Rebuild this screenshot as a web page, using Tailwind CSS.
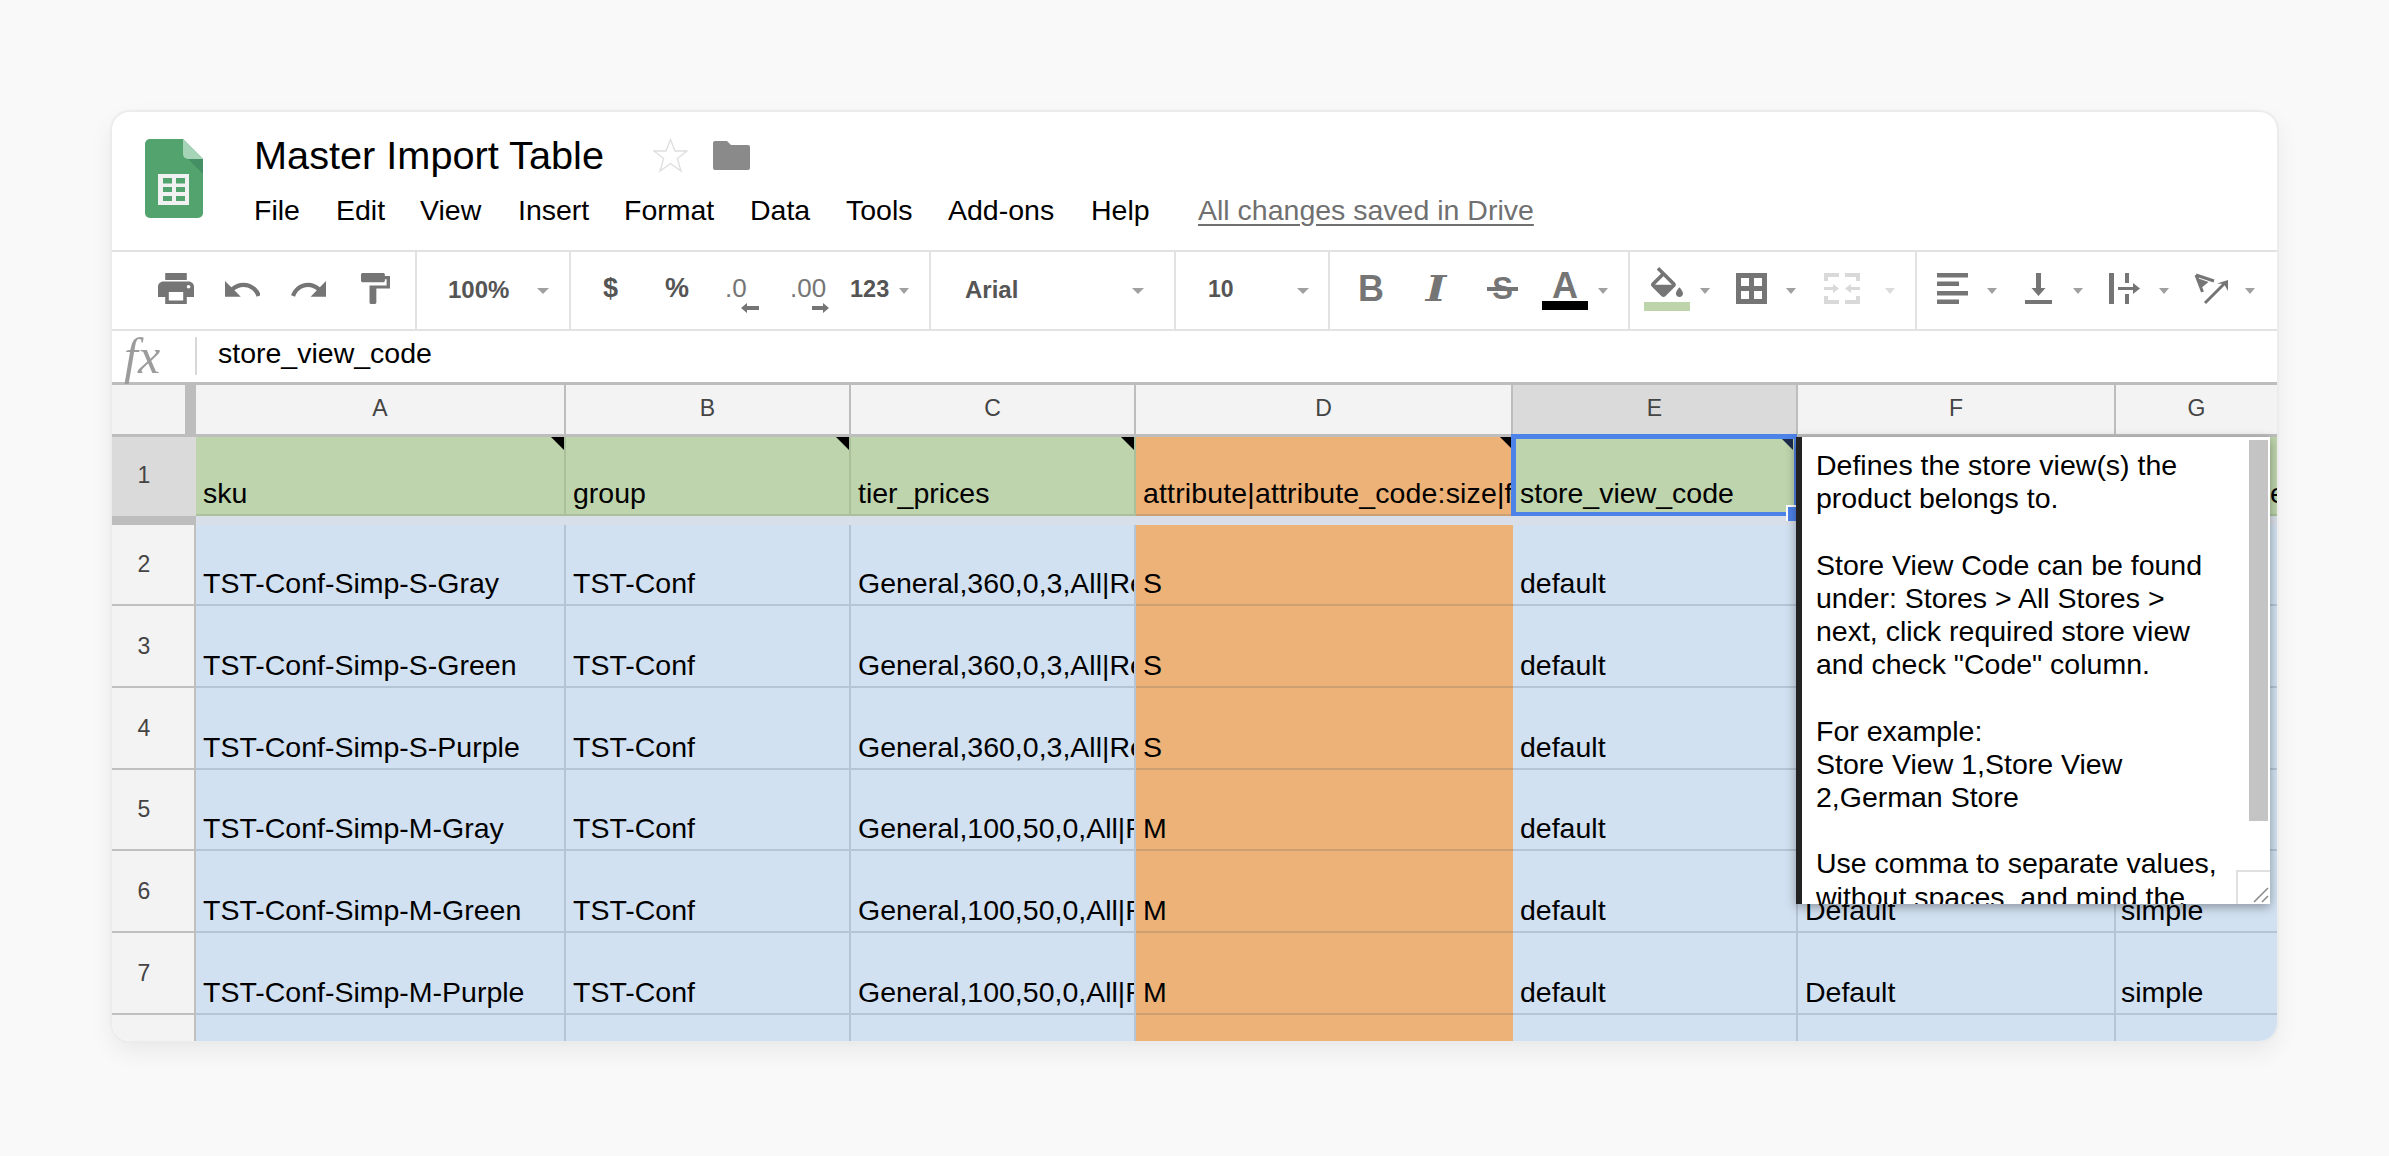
<!DOCTYPE html>
<html>
<head>
<meta charset="utf-8">
<script src="https://cdn.jsdelivr.net/npm/@tailwindcss/browser@4"></script>
</head>
<body class="m-0 h-[1156px] w-[2389px] overflow-hidden bg-[#f9f9f9] font-['Liberation_Sans',Arial,sans-serif] text-black">
<div class="ml-[112px] mt-[112px] flex h-[929px] w-[2165px] flex-col overflow-hidden rounded-[18px] bg-white shadow-[0_0_1px_2px_#ececec,0_10px_26px_rgba(0,0,0,0.07)]">

  <!-- title area -->
  <header class="flex h-[138px] shrink-0">
    <svg class="ml-[33px] mt-[27px] h-[79px] w-[58px] shrink-0" viewBox="0 0 58 79">
      <path d="M5 0H38L58 20V74a5 5 0 0 1-5 5H5a5 5 0 0 1-5-5V5a5 5 0 0 1 5-5z" fill="#52a36d"/>
      <path d="M38 0L58 20H43a5 5 0 0 1-5-5z" fill="#a5d4b7"/>
      <path d="M43 20L58 35V20z" fill="#458f64"/>
      <rect x="13" y="35" width="31" height="31" fill="#f1f1f1"/>
      <path d="M18 39h9v5.500h-9zM31 39h9v5.500h-9zM18 48h9v5h-9zM31 48h9v5h-9zM18 57h9v5h-9zM31 57h9v5h-9z" fill="#52a36d"/>
    </svg>
    <div class="ml-[51px] flex flex-col pt-[21px]">
      <div class="flex h-[45px] items-center">
        <span class="w-[349px] whitespace-nowrap text-[39.7px] leading-[45px]">Master Import Table</span>
        <svg class="ml-[50px] h-[35px] w-[35px]" viewBox="0 0 35 35"><path d="M17.500 1.500L22 13h12l-9.700 7.500L28 33l-10.500-7.500L7 33l3.700-12.500L1 13h12z" fill="#fff" stroke="#dedede" stroke-width="1.300"/></svg>
        <svg class="ml-[25px] h-[29px] w-[37px]" viewBox="0 0 37 29"><path d="M2 0h12l4 4h17a2 2 0 0 1 2 2v21a2 2 0 0 1-2 2H2a2 2 0 0 1-2-2V2a2 2 0 0 1 2-2z" fill="#8a8a8a"/></svg>
      </div>
      <nav class="mt-[15px] flex h-[33px] whitespace-nowrap text-[28.5px] leading-[34px]">
        <span class="w-[82px]">File</span>
        <span class="w-[84px]">Edit</span>
        <span class="w-[98px]">View</span>
        <span class="w-[106px]">Insert</span>
        <span class="w-[126px]">Format</span>
        <span class="w-[96px]">Data</span>
        <span class="w-[102px]">Tools</span>
        <span class="w-[143px]">Add-ons</span>
        <span class="w-[107px]">Help</span>
        <span class="text-[#707070] underline underline-offset-[4px]">All changes saved in Drive</span>
      </nav>
    </div>
  </header>

  <!-- toolbar -->
  <div class="flex h-[81px] shrink-0 border-y-2 border-[#e2e2e2] text-[#555]">
    <div class="flex w-[305px] shrink-0 items-center border-r-2 border-[#e2e2e2] pb-[4px]">
      <svg class="ml-[46px] h-[31px] w-[36px] shrink-0" viewBox="2 3 20 18" preserveAspectRatio="none"><path fill="#757575" d="M19 8H5c-1.660 0-3 1.340-3 3v6h4v4h12v-4h4v-6c0-1.660-1.340-3-3-3zm-3 11H8v-5h8v5zm3-7c-.55 0-1-.45-1-1s.45-1 1-1 1 .45 1 1-.45 1-1 1zm-1-9H6v4h12V3z"/></svg>
      <svg class="ml-[31px] h-[16px] w-[35px] shrink-0" viewBox="2 7 20 9.200" preserveAspectRatio="none"><path fill="#757575" d="M12.500 8c-2.650 0-5.050.99-6.900 2.600L2 7v9h9l-3.620-3.620c1.390-1.160 3.160-1.880 5.120-1.880 3.540 0 6.550 2.310 7.600 5.500l2.370-.78C21.080 11.030 17.150 8 12.500 8z"/></svg>
      <svg class="ml-[31px] h-[16px] w-[35px] shrink-0" viewBox="1.500 7 20.500 9.200" preserveAspectRatio="none"><path fill="#757575" d="M18.400 10.600C16.550 8.990 14.150 8 11.500 8c-4.650 0-8.580 3.030-9.960 7.220L3.900 16c1.050-3.190 4.050-5.500 7.600-5.500 1.950 0 3.730.72 5.120 1.880L13 16h9V7l-3.600 3.600z"/></svg>
      <svg class="ml-[35px] h-[31px] w-[29px] shrink-0" viewBox="4 2 17 20" preserveAspectRatio="none"><path fill="#757575" d="M18 4V3c0-.55-.45-1-1-1H5c-.55 0-1 .45-1 1v4c0 .55.45 1 1 1h12c.55 0 1-.45 1-1V6h1v4H9v11c0 .55.45 1 1 1h2c.55 0 1-.45 1-1v-9h8V4h-3z"/></svg>
    </div>
    <div class="flex w-[154px] shrink-0 items-center border-r-2 border-[#e2e2e2] pb-[4px]">
      <span class="ml-[31px] w-[61px] pt-[2px] text-[24px] font-bold">100%</span>
      <span class="ml-[28px] mt-[5px] h-0 w-0 border-x-[6px] border-t-[6px] border-x-transparent border-t-[#a0a0a0]"></span>
    </div>
    <div class="flex w-[360px] shrink-0 items-center border-r-2 border-[#e2e2e2] pb-[4px]">
      <span class="ml-[32px] w-[15px] text-[27px] font-bold leading-none">$</span>
      <span class="ml-[47px] w-[24px] text-[27px] font-bold leading-none">%</span>
      <span class="relative ml-[36px] h-[36px] w-[34px] text-[26px] leading-[35px] text-[#757575]">.0
        <svg class="absolute left-[16px] top-[32px] h-[10px] w-[18px]" viewBox="0 0 18 10"><path fill="#757575" d="M0 5L6 0v3h12v4H6v3z"/></svg>
      </span>
      <span class="relative ml-[31px] h-[36px] w-[39px] text-[26px] leading-[35px] text-[#757575]">.00
        <svg class="absolute left-[22px] top-[32px] h-[10px] w-[17px]" viewBox="0 0 17 10"><path fill="#757575" d="M17 5l-6-5v3H0v4h11v3z"/></svg>
      </span>
      <span class="ml-[21px] w-[39px] pt-[2px] text-[23.500px] font-bold">123</span>
      <span class="ml-[10px] mt-[5px] h-0 w-0 border-x-[5px] border-t-[6px] border-x-transparent border-t-[#a0a0a0]"></span>
    </div>
    <div class="flex w-[245px] shrink-0 items-center border-r-2 border-[#e2e2e2] pb-[4px]">
      <span class="ml-[34px] w-[54px] pt-[2px] text-[24px] font-bold">Arial</span>
      <span class="ml-[113px] mt-[5px] h-0 w-0 border-x-[6px] border-t-[6px] border-x-transparent border-t-[#a0a0a0]"></span>
    </div>
    <div class="flex w-[154px] shrink-0 items-center border-r-2 border-[#e2e2e2] pb-[4px]">
      <span class="ml-[32px] w-[26px] pt-[2px] text-[23px] font-bold">10</span>
      <span class="ml-[63px] mt-[5px] h-0 w-0 border-x-[6px] border-t-[6px] border-x-transparent border-t-[#a0a0a0]"></span>
    </div>
    <div class="flex w-[300px] shrink-0 items-center border-r-2 border-[#e2e2e2] pb-[4px]">
      <span class="ml-[28px] w-[22px] text-[36px] font-bold leading-none text-[#757575]">B</span>
      <span class="ml-[43px] w-[26px] scale-x-125 text-center font-['DejaVu_Serif',serif] text-[35px] font-bold italic leading-none text-[#757575]">I</span>
      <span class="relative ml-[38px] w-[31px] text-center text-[31px] font-bold leading-none text-[#757575]">S
        <span class="absolute left-0 top-[14px] h-[4px] w-[31px] bg-[#757575]"></span>
      </span>
      <span class="ml-[24px] flex w-[46px] flex-col items-center">
        <span class="h-[33px] text-[36px] font-bold leading-[36px] text-[#757575]">A</span>
        <span class="h-[9px] w-[46px] bg-black"></span>
      </span>
      <span class="ml-[10px] mt-[5px] h-0 w-0 border-x-[5px] border-t-[6px] border-x-transparent border-t-[#a0a0a0]"></span>
    </div>
    <div class="flex w-[287px] shrink-0 items-center border-r-2 border-[#e2e2e2] pb-[4px]">
      <span class="ml-[14px] flex w-[46px] flex-col items-center">
        <svg class="mb-[5px] h-[30px] w-[32px]" viewBox="3 0 18 17" preserveAspectRatio="none"><path fill="#757575" d="M16.560 8.940L7.620 0 6.210 1.410l2.380 2.380-5.150 5.150c-.59.59-.59 1.540 0 2.120l5.500 5.500c.29.29.68.44 1.060.44s.77-.15 1.060-.44l5.500-5.500c.59-.58.59-1.530 0-2.120zM5.210 10L10 5.210 14.790 10H5.210zM19 11.500s-2 2.170-2 3.500c0 1.100.9 2 2 2s2-.9 2-2c0-1.330-2-3.500-2-3.500z"/></svg>
        <span class="h-[9px] w-[46px] bg-[#bed5ac]"></span>
      </span>
      <span class="ml-[10px] mt-[5px] h-0 w-0 border-x-[5px] border-t-[6px] border-x-transparent border-t-[#a0a0a0]"></span>
      <svg class="ml-[26px] h-[31px] w-[31px] shrink-0" viewBox="0 0 31 31"><path fill="none" stroke="#757575" stroke-width="5" d="M2.500 2.500h26v26h-26zM15.500 2.500v26M2.500 15.500h26"/></svg>
      <span class="ml-[19px] mt-[5px] h-0 w-0 border-x-[5px] border-t-[6px] border-x-transparent border-t-[#a0a0a0]"></span>
      <svg class="ml-[28px] h-[31px] w-[36px] shrink-0" viewBox="0 0 36 31"><path fill="#d9d9d9" d="M0 0h15v4H4v4H0zM21 0h15v8h-4V4H21zM0 23h4v4h11v4H0zM32 23h4v8H21v-4h11zM0 14h9v-3l6 4.500-6 4.500v-3H0zM36 14h-9v-3l-6 4.500 6 4.500v-3h9z"/></svg>
      <span class="ml-[25px] mt-[5px] h-0 w-0 border-x-[5px] border-t-[6px] border-x-transparent border-t-[#dcdcdc]"></span>
    </div>
    <div class="flex grow items-center pb-[4px]">
      <svg class="ml-[20px] h-[31px] w-[31px] shrink-0" viewBox="0 0 31 31"><path fill="#757575" d="M0 0h31v4.500H0zM0 8.500h22v4.500H0zM0 18h31v4.500H0zM0 26.500h22V31H0z"/></svg>
      <span class="ml-[19px] mt-[5px] h-0 w-0 border-x-[5px] border-t-[6px] border-x-transparent border-t-[#a0a0a0]"></span>
      <svg class="ml-[28px] h-[31px] w-[27px] shrink-0" viewBox="0 0 27 31"><path fill="#757575" d="M11 0h5v15h4.500l-7 8-7-8H11zM0 27h27v4H0z"/></svg>
      <span class="ml-[21px] mt-[5px] h-0 w-0 border-x-[5px] border-t-[6px] border-x-transparent border-t-[#a0a0a0]"></span>
      <svg class="ml-[26px] h-[31px] w-[31px] shrink-0" viewBox="0 0 31 31"><path fill="#757575" d="M0 0h5v31H0zM16 0h4v10h-4zM16 21h4v10h-4zM9 14h15v-4l7 5.500-7 5.500v-4H9z"/></svg>
      <span class="ml-[19px] mt-[5px] h-0 w-0 border-x-[5px] border-t-[6px] border-x-transparent border-t-[#a0a0a0]"></span>
      <svg class="ml-[25px] h-[33px] w-[34px] shrink-0" viewBox="0 0 34 33"><path fill="none" stroke="#757575" stroke-width="3" d="M2 3l18 6M2 3l6.500 17M7 9l4.500 1.500L8.500 13zM11 31L31 11"/><path fill="#757575" d="M34 8v11l-4-7-7-.5z"/></svg>
      <span class="ml-[17px] mt-[5px] h-0 w-0 border-x-[5px] border-t-[6px] border-x-transparent border-t-[#a0a0a0]"></span>
    </div>
  </div>

  <!-- formula bar -->
  <div class="flex h-[54px] shrink-0 border-b-[3px] border-[#bdbdbd]">
    <span class="ml-[12px] mt-[3px] w-[39px] whitespace-nowrap font-['Liberation_Serif',serif] text-[50px] italic leading-[44px] text-[#9c9c9c]">fx</span>
    <span class="ml-[32px] mt-[6px] h-[38px] w-[2px] bg-[#d8d8d8]"></span>
    <span class="ml-[21px] mt-[6px] whitespace-nowrap text-[28.5px] leading-[33px]">store_view_code</span>
  </div>

  <!-- sheet -->
  <div class="relative grow overflow-hidden">
    <div class="grid grid-cols-[84px_370px_285px_285px_377px_285px_318px_161px] grid-rows-[52px_79px_9px_81px_82px_82px_81px_82px_82px_60px] whitespace-nowrap text-[28.5px] leading-[33px]">

      <!-- column letters -->
      <div class="border-b-[3px] border-r-[11px] border-[#bdbdbd] bg-[#f3f3f3]"></div>
      <div class="flex items-center justify-center border-b-[3px] border-r-2 border-[#bdbdbd] bg-[#f3f3f3] pb-[2px] text-[23px] text-[#444]">A</div>
      <div class="flex items-center justify-center border-b-[3px] border-r-2 border-[#bdbdbd] bg-[#f3f3f3] pb-[2px] text-[23px] text-[#444]">B</div>
      <div class="flex items-center justify-center border-b-[3px] border-r-2 border-[#bdbdbd] bg-[#f3f3f3] pb-[2px] text-[23px] text-[#444]">C</div>
      <div class="flex items-center justify-center border-b-[3px] border-r-2 border-[#bdbdbd] bg-[#f3f3f3] pb-[2px] text-[23px] text-[#444]">D</div>
      <div class="flex items-center justify-center border-b-[3px] border-r-2 border-[#bdbdbd] bg-[#dadada] pb-[2px] text-[23px] text-[#444]">E</div>
      <div class="flex items-center justify-center border-b-[3px] border-r-2 border-[#bdbdbd] bg-[#f3f3f3] pb-[2px] text-[23px] text-[#444]">F</div>
      <div class="flex items-center justify-center border-b-[3px] border-[#bdbdbd] bg-[#f3f3f3] pb-[2px] text-[23px] text-[#444]">G</div>

      <!-- row 1 -->
      <div class="flex items-center justify-center bg-[#dadada] pb-[3px] pr-[20px] text-[23px] text-[#444]">1</div>
      <div class="relative flex items-end overflow-hidden border-b-2 border-r-2 border-[#a9c09a] bg-[#bdd4ac] px-[7px] pb-[4px]">sku<span class="absolute right-0 top-0 h-0 w-0 border-l-[13px] border-t-[13px] border-l-transparent border-t-black"></span></div>
      <div class="relative flex items-end overflow-hidden border-b-2 border-r-2 border-[#a9c09a] bg-[#bdd4ac] px-[7px] pb-[4px]">group<span class="absolute right-0 top-0 h-0 w-0 border-l-[13px] border-t-[13px] border-l-transparent border-t-black"></span></div>
      <div class="relative flex items-end overflow-hidden border-b-2 border-r-2 border-[#a9c09a] bg-[#bdd4ac] px-[7px] pb-[4px]">tier_prices<span class="absolute right-0 top-0 h-0 w-0 border-l-[13px] border-t-[13px] border-l-transparent border-t-black"></span></div>
      <div class="relative flex items-end overflow-hidden border-b-2 border-[#cda071] bg-[#edb277] pb-[4px] pl-[7px] tracking-[0.15px]">attribute|attribute_code:size|format<span class="absolute right-0 top-0 h-0 w-0 border-l-[13px] border-t-[13px] border-l-transparent border-t-black"></span></div>
      <div class="relative flex items-end overflow-hidden border-b-2 border-r-2 border-[#a9c09a] bg-[#bdd4ac] px-[7px] pb-[4px]">store_view_code</div>
      <div class="flex items-end overflow-hidden border-b-2 border-r-2 border-[#a9c09a] bg-[#bdd4ac] px-[7px] pb-[4px]">website</div>
      <div class="flex items-end overflow-hidden border-b-2 border-[#a9c09a] bg-[#bdd4ac] pb-[4px] pl-[5px]">product_type</div>

      <!-- frozen divider -->
      <div class="bg-[#bdbdbd]"></div>
      <div class="col-span-7 bg-[#d9dfe9]"></div>

      <!-- row 2 -->
      <div class="flex items-center justify-center border-b-2 border-r-2 border-[#c0c0c0] bg-[#f3f3f3] pr-[18px] text-[23px] text-[#444]">2</div>
      <div class="flex items-end overflow-hidden border-b-2 border-r-2 border-[#b5c5d5] bg-[#d2e1f1] px-[7px] pb-[4px]">TST-Conf-Simp-S-Gray</div>
      <div class="flex items-end overflow-hidden border-b-2 border-r-2 border-[#b5c5d5] bg-[#d2e1f1] px-[7px] pb-[4px]">TST-Conf</div>
      <div class="flex items-end overflow-hidden border-b-2 border-r-2 border-[#b5c5d5] bg-[#d2e1f1] pb-[4px] pl-[7px]">General,360,0,3,All|Retailer</div>
      <div class="flex items-end overflow-hidden border-b-2 border-[#cda071] bg-[#edb277] px-[7px] pb-[4px]">S</div>
      <div class="flex items-end overflow-hidden border-b-2 border-r-2 border-[#b5c5d5] bg-[#d2e1f1] px-[7px] pb-[4px]">default</div>
      <div class="flex items-end overflow-hidden border-b-2 border-r-2 border-[#b5c5d5] bg-[#d2e1f1] px-[7px] pb-[4px]">Default</div>
      <div class="flex items-end overflow-hidden border-b-2 border-[#b5c5d5] bg-[#d2e1f1] pb-[4px] pl-[5px]">simple</div>

      <!-- row 3 -->
      <div class="flex items-center justify-center border-b-2 border-r-2 border-[#c0c0c0] bg-[#f3f3f3] pr-[18px] text-[23px] text-[#444]">3</div>
      <div class="flex items-end overflow-hidden border-b-2 border-r-2 border-[#b5c5d5] bg-[#d2e1f1] px-[7px] pb-[4px]">TST-Conf-Simp-S-Green</div>
      <div class="flex items-end overflow-hidden border-b-2 border-r-2 border-[#b5c5d5] bg-[#d2e1f1] px-[7px] pb-[4px]">TST-Conf</div>
      <div class="flex items-end overflow-hidden border-b-2 border-r-2 border-[#b5c5d5] bg-[#d2e1f1] pb-[4px] pl-[7px]">General,360,0,3,All|Retailer</div>
      <div class="flex items-end overflow-hidden border-b-2 border-[#cda071] bg-[#edb277] px-[7px] pb-[4px]">S</div>
      <div class="flex items-end overflow-hidden border-b-2 border-r-2 border-[#b5c5d5] bg-[#d2e1f1] px-[7px] pb-[4px]">default</div>
      <div class="flex items-end overflow-hidden border-b-2 border-r-2 border-[#b5c5d5] bg-[#d2e1f1] px-[7px] pb-[4px]">Default</div>
      <div class="flex items-end overflow-hidden border-b-2 border-[#b5c5d5] bg-[#d2e1f1] pb-[4px] pl-[5px]">simple</div>

      <!-- row 4 -->
      <div class="flex items-center justify-center border-b-2 border-r-2 border-[#c0c0c0] bg-[#f3f3f3] pr-[18px] text-[23px] text-[#444]">4</div>
      <div class="flex items-end overflow-hidden border-b-2 border-r-2 border-[#b5c5d5] bg-[#d2e1f1] px-[7px] pb-[4px]">TST-Conf-Simp-S-Purple</div>
      <div class="flex items-end overflow-hidden border-b-2 border-r-2 border-[#b5c5d5] bg-[#d2e1f1] px-[7px] pb-[4px]">TST-Conf</div>
      <div class="flex items-end overflow-hidden border-b-2 border-r-2 border-[#b5c5d5] bg-[#d2e1f1] pb-[4px] pl-[7px]">General,360,0,3,All|Retailer</div>
      <div class="flex items-end overflow-hidden border-b-2 border-[#cda071] bg-[#edb277] px-[7px] pb-[4px]">S</div>
      <div class="flex items-end overflow-hidden border-b-2 border-r-2 border-[#b5c5d5] bg-[#d2e1f1] px-[7px] pb-[4px]">default</div>
      <div class="flex items-end overflow-hidden border-b-2 border-r-2 border-[#b5c5d5] bg-[#d2e1f1] px-[7px] pb-[4px]">Default</div>
      <div class="flex items-end overflow-hidden border-b-2 border-[#b5c5d5] bg-[#d2e1f1] pb-[4px] pl-[5px]">simple</div>

      <!-- row 5 -->
      <div class="flex items-center justify-center border-b-2 border-r-2 border-[#c0c0c0] bg-[#f3f3f3] pr-[18px] text-[23px] text-[#444]">5</div>
      <div class="flex items-end overflow-hidden border-b-2 border-r-2 border-[#b5c5d5] bg-[#d2e1f1] px-[7px] pb-[4px]">TST-Conf-Simp-M-Gray</div>
      <div class="flex items-end overflow-hidden border-b-2 border-r-2 border-[#b5c5d5] bg-[#d2e1f1] px-[7px] pb-[4px]">TST-Conf</div>
      <div class="flex items-end overflow-hidden border-b-2 border-r-2 border-[#b5c5d5] bg-[#d2e1f1] pb-[4px] pl-[7px]">General,100,50,0,All|Retailer</div>
      <div class="flex items-end overflow-hidden border-b-2 border-[#cda071] bg-[#edb277] px-[7px] pb-[4px]">M</div>
      <div class="flex items-end overflow-hidden border-b-2 border-r-2 border-[#b5c5d5] bg-[#d2e1f1] px-[7px] pb-[4px]">default</div>
      <div class="flex items-end overflow-hidden border-b-2 border-r-2 border-[#b5c5d5] bg-[#d2e1f1] px-[7px] pb-[4px]">Default</div>
      <div class="flex items-end overflow-hidden border-b-2 border-[#b5c5d5] bg-[#d2e1f1] pb-[4px] pl-[5px]">simple</div>

      <!-- row 6 -->
      <div class="flex items-center justify-center border-b-2 border-r-2 border-[#c0c0c0] bg-[#f3f3f3] pr-[18px] text-[23px] text-[#444]">6</div>
      <div class="flex items-end overflow-hidden border-b-2 border-r-2 border-[#b5c5d5] bg-[#d2e1f1] px-[7px] pb-[4px]">TST-Conf-Simp-M-Green</div>
      <div class="flex items-end overflow-hidden border-b-2 border-r-2 border-[#b5c5d5] bg-[#d2e1f1] px-[7px] pb-[4px]">TST-Conf</div>
      <div class="flex items-end overflow-hidden border-b-2 border-r-2 border-[#b5c5d5] bg-[#d2e1f1] pb-[4px] pl-[7px]">General,100,50,0,All|Retailer</div>
      <div class="flex items-end overflow-hidden border-b-2 border-[#cda071] bg-[#edb277] px-[7px] pb-[4px]">M</div>
      <div class="flex items-end overflow-hidden border-b-2 border-r-2 border-[#b5c5d5] bg-[#d2e1f1] px-[7px] pb-[4px]">default</div>
      <div class="flex items-end overflow-hidden border-b-2 border-r-2 border-[#b5c5d5] bg-[#d2e1f1] px-[7px] pb-[4px]">Default</div>
      <div class="flex items-end overflow-hidden border-b-2 border-[#b5c5d5] bg-[#d2e1f1] pb-[4px] pl-[5px]">simple</div>

      <!-- row 7 -->
      <div class="flex items-center justify-center border-b-2 border-r-2 border-[#c0c0c0] bg-[#f3f3f3] pr-[18px] text-[23px] text-[#444]">7</div>
      <div class="flex items-end overflow-hidden border-b-2 border-r-2 border-[#b5c5d5] bg-[#d2e1f1] px-[7px] pb-[4px]">TST-Conf-Simp-M-Purple</div>
      <div class="flex items-end overflow-hidden border-b-2 border-r-2 border-[#b5c5d5] bg-[#d2e1f1] px-[7px] pb-[4px]">TST-Conf</div>
      <div class="flex items-end overflow-hidden border-b-2 border-r-2 border-[#b5c5d5] bg-[#d2e1f1] pb-[4px] pl-[7px]">General,100,50,0,All|Retailer</div>
      <div class="flex items-end overflow-hidden border-b-2 border-[#cda071] bg-[#edb277] px-[7px] pb-[4px]">M</div>
      <div class="flex items-end overflow-hidden border-b-2 border-r-2 border-[#b5c5d5] bg-[#d2e1f1] px-[7px] pb-[4px]">default</div>
      <div class="flex items-end overflow-hidden border-b-2 border-r-2 border-[#b5c5d5] bg-[#d2e1f1] px-[7px] pb-[4px]">Default</div>
      <div class="flex items-end overflow-hidden border-b-2 border-[#b5c5d5] bg-[#d2e1f1] pb-[4px] pl-[5px]">simple</div>

      <!-- row 8 (cut off) -->
      <div class="border-r-2 border-[#c0c0c0] bg-[#f3f3f3]"></div>
      <div class="border-r-2 border-[#b5c5d5] bg-[#d2e1f1]"></div>
      <div class="border-r-2 border-[#b5c5d5] bg-[#d2e1f1]"></div>
      <div class="border-r-2 border-[#b5c5d5] bg-[#d2e1f1]"></div>
      <div class="bg-[#edb277]"></div>
      <div class="border-r-2 border-[#b5c5d5] bg-[#d2e1f1]"></div>
      <div class="border-r-2 border-[#b5c5d5] bg-[#d2e1f1]"></div>
      <div class="bg-[#d2e1f1]"></div>
    </div>

    <!-- active cell outline -->
    <div class="absolute left-[1399px] top-[49px] h-[82px] w-[286px] border-b-4 border-l-[5px] border-r-[3px] border-t-[5px] border-[#4d82e8]">
      <span class="absolute right-[1px] top-0 h-0 w-0 border-l-[11px] border-t-[11px] border-l-transparent border-t-[#1c2b4a]"></span>
      <span class="absolute -bottom-[9px] -right-[3px] h-[16px] w-[11px] border-l-2 border-t-2 border-white bg-[#4d82e8]"></span>
    </div>

    <!-- note popover -->
    <div class="absolute left-[1684px] top-[52px] h-[467px] w-[474px] overflow-hidden border-l-[6px] border-[#222] bg-white pl-[14px] pt-[12px] text-[28.5px] leading-[33.2px] text-black shadow-[0_3px_10px_rgba(0,0,0,0.35)]">
      <p class="whitespace-nowrap">Defines the store view(s) the<br>product belongs to.<br><br>Store View Code can be found<br>under: Stores &gt; All Stores &gt;<br>next, click required store view<br>and check "Code" column.<br><br>For example:<br>Store View 1,Store View<br>2,German Store<br><br>Use comma to separate values,<br>without spaces, and mind the</p>
      <div class="absolute right-[2px] top-[3px] h-[381px] w-[20px] border-l border-white bg-[#c4c4c4]"></div>
      <div class="absolute bottom-0 right-0 h-[34px] w-[34px] border-l-2 border-t-2 border-[#e0e0e0] bg-white">
        <svg class="absolute bottom-0 right-0 h-[22px] w-[22px]" viewBox="0 0 22 22"><path d="M6 20L20 6M14 20L20 14" fill="none" stroke="#888" stroke-width="1.500"/></svg>
      </div>
    </div>
  </div>
</div>
</body>
</html>
